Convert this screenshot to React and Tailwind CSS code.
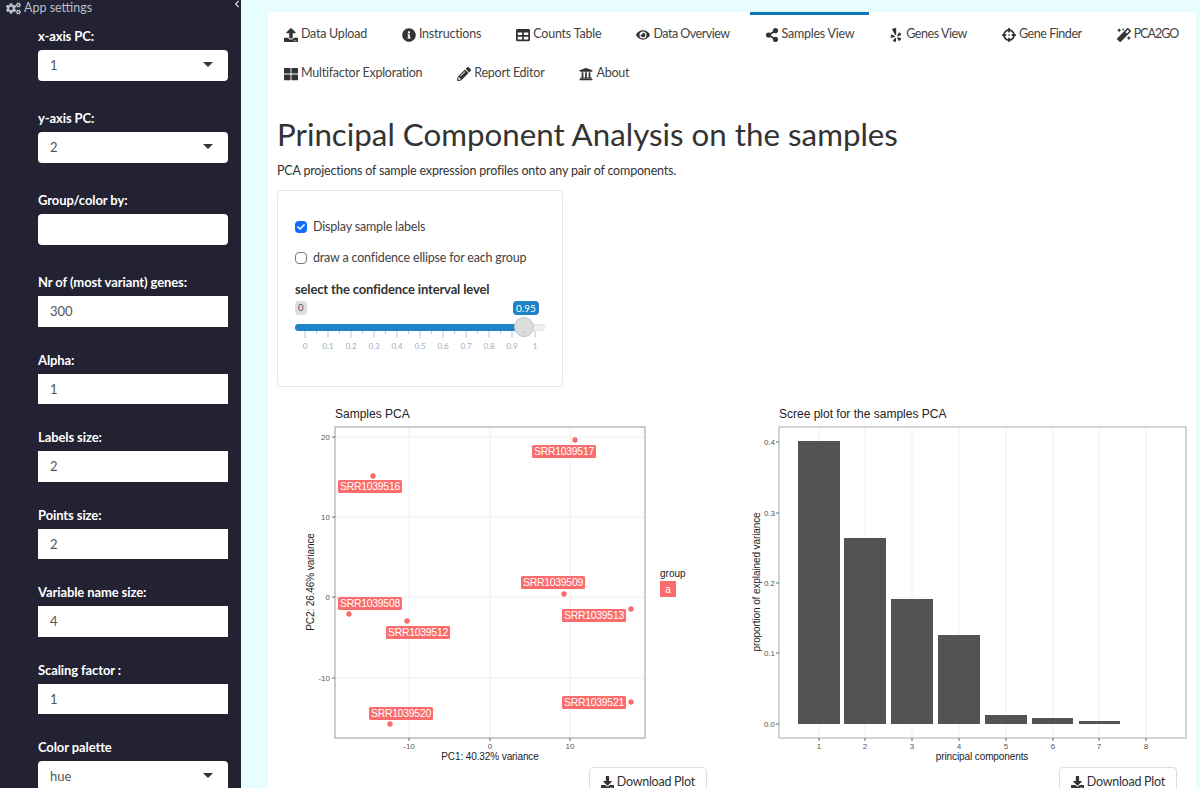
import { FaChevronLeft, FaCogs, FaUpload, FaInfoCircle, FaTable, FaEye, FaShareAlt, FaYelp, FaCrosshairs, FaMagic, FaThLarge, FaPencilAlt, FaUniversity, FaDownload, FaCheck } from 'react-icons/fa';

const fields = [
	{ label: 'x-axis PC:', value: '1', kind: 'select' },
	{ label: 'y-axis PC:', value: '2', kind: 'select' },
	{ label: 'Group/color by:', value: '', kind: 'empty' },
	{ label: 'Nr of (most variant) genes:', value: '300', kind: 'number' },
	{ label: 'Alpha:', value: '1', kind: 'number' },
	{ label: 'Labels size:', value: '2', kind: 'number' },
	{ label: 'Points size:', value: '2', kind: 'number' },
	{ label: 'Variable name size:', value: '4', kind: 'number' },
	{ label: 'Scaling factor :', value: '1', kind: 'number' },
	{ label: 'Color palette', value: 'hue', kind: 'select' },
];

const tabRows = [
	[
		{ icon: FaUpload, label: 'Data Upload', tracking: 'tracking-[-0.25px]' },
		{ icon: FaInfoCircle, label: 'Instructions', tracking: 'tracking-[-0.2px]' },
		{ icon: FaTable, label: 'Counts Table', tracking: 'tracking-[-0.2px]' },
		{ icon: FaEye, label: 'Data Overview', tracking: 'tracking-[-0.5px]' },
		{ icon: FaShareAlt, label: 'Samples View', active: true, tracking: 'tracking-[-0.25px]' },
		{ icon: FaYelp, label: 'Genes View', tracking: 'tracking-[-0.45px]' },
		{ icon: FaCrosshairs, label: 'Gene Finder', tracking: 'tracking-[-0.45px]' },
		{ icon: FaMagic, label: 'PCA2GO', tracking: 'tracking-[-1px]' },
	],
	[
		{ icon: FaThLarge, label: 'Multifactor Exploration', tracking: 'tracking-[-0.25px]' },
		{ icon: FaPencilAlt, label: 'Report Editor', tracking: 'tracking-[-0.25px]' },
		{ icon: FaUniversity, label: 'About', tracking: 'tracking-[-0.25px]' },
	],
];

const samplePoints = [[575, 440], [373, 476], [349, 614], [407, 621], [564, 594], [631, 609], [631, 702], [390, 724]];

const sampleLabels = [
	{ text: 'SRR1039517', x: 532, y: 445 },
	{ text: 'SRR1039516', x: 338, y: 480 },
	{ text: 'SRR1039509', x: 521, y: 576 },
	{ text: 'SRR1039508', x: 338, y: 597 },
	{ text: 'SRR1039512', x: 386, y: 626 },
	{ text: 'SRR1039513', x: 562, y: 609 },
	{ text: 'SRR1039521', x: 562, y: 696 },
	{ text: 'SRR1039520', x: 369, y: 707 },
];

const screeBars = [
	[798, 840, 441], [844, 886, 538], [891, 933, 599], [938, 980, 635],
	[985, 1027, 715], [1032, 1073, 718], [1079, 1120, 721],
];

const plotFont = "'Liberation Sans', Arial, sans-serif";

function SidebarField({ label, value, kind }) {
	return (
		<div className={kind === 'number' ? 'mb-[23px]' : 'mb-[27.5px]'}>
			<label className="block h-5 mb-1 text-[13px] leading-5 font-bold tracking-[-0.1px] text-white">{label}</label>
			<div className={`relative h-[30.5px] bg-white text-[13px] leading-[30px] text-[#555] pl-3 ${kind === 'number' ? '' : 'rounded'}`}>
				{value}
				{kind === 'select' && (
					<span className="absolute right-[15px] top-[12px] w-0 h-0 border-x-[5px] border-t-[5px] border-x-transparent border-t-[#333]" />
				)}
			</div>
		</div>
	);
}

function Tab({ icon: Icon, label, active, tracking }) {
	return (
		<a className={`flex items-center h-[39px] pt-[3px] px-[15px] mr-[5px] text-[12.5px] whitespace-nowrap text-[#444] border-t-[3px] ${tracking} ${active ? 'border-[#0a78b4]' : 'border-transparent'}`}>
			<Icon size={14} className="mr-[3px] text-[#333] shrink-0" />
			{label}
		</a>
	);
}

function DownloadButton() {
	return (
		<button className="flex items-center h-[30px] px-[11px] bg-white border border-[#ddd] rounded text-[12.5px] leading-[12px] tracking-[-0.25px] text-[#333] whitespace-nowrap">
			<FaDownload size={13} className="mr-[3px]" />
			Download Plot
		</button>
	);
}

function SamplesPlot() {
	return (
		<svg width="400" height="367" viewBox="300 400 400 367" style={{ fontFamily: plotFont }}>
			<text x="335" y="418" fontSize="12" fill="#222">Samples PCA</text>
			<rect x="335" y="427" width="310" height="311" fill="#fff" />
			{[437, 517, 597, 678].map(y => <line key={y} x1="335" x2="645" y1={y} y2={y} stroke="#f0f0f0" />)}
			{[409, 490, 570].map(x => <line key={x} x1={x} x2={x} y1="427" y2="738" stroke="#f0f0f0" />)}
			<rect x="335" y="427" width="310" height="311" fill="none" stroke="#999" />
			{[[437, '20'], [517, '10'], [597, '0'], [678, '-10']].map(([y, t]) => (
				<g key={t}>
					<line x1="332" x2="335" y1={y} y2={y} stroke="#666" />
					<text x="330" y={y + 3} fontSize="8" fill="#555" textAnchor="end">{t}</text>
				</g>
			))}
			{[[409, '-10'], [490, '0'], [570, '10']].map(([x, t]) => (
				<g key={t}>
					<line x1={x} x2={x} y1="738" y2="741" stroke="#666" />
					<text x={x} y="749" fontSize="8" fill="#555" textAnchor="middle">{t}</text>
				</g>
			))}
			<text x="490" y="760" fontSize="10" letterSpacing="-0.1" fill="#222" textAnchor="middle">PC1: 40.32% variance</text>
			<text transform="translate(314 582) rotate(-90)" fontSize="10" letterSpacing="-0.1" fill="#222" textAnchor="middle">PC2: 26.46% variance</text>
			{samplePoints.map(([x, y]) => <circle key={x + '-' + y} cx={x} cy={y} r="2.7" fill="#fb6d6d" />)}
			{sampleLabels.map(({ text, x, y }) => (
				<g key={text}>
					<rect x={x} y={y} width="64" height="13" rx="1.5" fill="#fb6d6d" />
					<text x={x + 32} y={y + 10} fontSize="10.4" letterSpacing="-0.25" fill="#fff" textAnchor="middle">{text}</text>
				</g>
			))}
			<text x="660" y="577" fontSize="10" fill="#222">group</text>
			<rect x="660" y="581" width="16" height="16" fill="#fb6d6d" />
			<text x="668" y="593" fontSize="10" fill="#fff" textAnchor="middle">a</text>
		</svg>
	);
}

function ScreePlot() {
	return (
		<svg width="456" height="367" viewBox="740 400 456 367" style={{ fontFamily: plotFont }}>
			<text x="779" y="418" fontSize="12" fill="#222">Scree plot for the samples PCA</text>
			<rect x="779" y="427" width="407" height="311" fill="#fff" />
			{[819, 865, 912, 959, 1006, 1053, 1099, 1146].map(x => <line key={x} x1={x} x2={x} y1="427" y2="738" stroke="#f0f0f0" />)}
			{screeBars.map(([x1, x2, top]) => (
				<rect key={x1} x={x1} y={top} width={x2 - x1} height={724 - top} fill="#535353" />
			))}
			<rect x="779" y="427" width="407" height="311" fill="none" stroke="#aaa" />
			{[[442, '0.4'], [513, '0.3'], [583, '0.2'], [653, '0.1'], [724, '0.0']].map(([y, t]) => (
				<g key={t}>
					<line x1="776" x2="779" y1={y} y2={y} stroke="#666" />
					<text x="775" y={y + 3} fontSize="8" fill="#555" textAnchor="end">{t}</text>
				</g>
			))}
			{[[819, '1'], [865, '2'], [912, '3'], [959, '4'], [1006, '5'], [1053, '6'], [1099, '7'], [1146, '8']].map(([x, t]) => (
				<g key={t}>
					<line x1={x} x2={x} y1="738" y2="741" stroke="#666" />
					<text x={x} y="749" fontSize="8" fill="#555" textAnchor="middle">{t}</text>
				</g>
			))}
			<text x="982" y="760" fontSize="10" letterSpacing="-0.1" fill="#222" textAnchor="middle">principal components</text>
			<text transform="translate(760 582) rotate(-90)" fontSize="10" letterSpacing="-0.1" fill="#222" textAnchor="middle">proportion of explained variance</text>
		</svg>
	);
}

function ConfidenceSlider() {
	const ticks = Array.from({ length: 21 }, (_, i) => i);
	return (
		<div className="relative h-[60px] mt-[3px]">
			<span className="absolute left-0 top-0 h-[14px] px-[3px] rounded-sm bg-[#ddd] text-[9.5px] leading-[14px] text-[#555]">0</span>
			<span className="absolute left-[218px] top-0 h-[14px] px-[3px] rounded-sm bg-[#2084c8] text-[10px] leading-[14px] text-white">0.95</span>
			<div className="absolute left-0 top-[23px] w-[250px] h-[7px] rounded-full bg-[#f0f0f0] border border-[#ddd]" />
			<div className="absolute left-0 top-[23px] w-[229px] h-[7px] rounded-l-full bg-[#2084c8]" />
			<div className="absolute left-[219px] top-[16px] w-[20px] h-[20px] rounded-full bg-[#dcdcdc] border border-[#c4c4c4]" />
			<svg className="absolute left-0 top-[30px]" width="250" height="30" style={{ fontFamily: "'Lato', sans-serif" }}>
				{ticks.map(i => (
					<line key={i} x1={10 + i * 11.5} x2={10 + i * 11.5} y1="0" y2={i % 2 ? 3 : 7} stroke="#a9cfe4" />
				))}
				{ticks.filter(i => i % 2 === 0).map(i => (
					<text key={i} x={10 + i * 11.5} y="18" fontSize="8" fill="#9db0bc" textAnchor="middle">{i === 0 ? '0' : i === 20 ? '1' : (i / 20).toFixed(1)}</text>
				))}
			</svg>
		</div>
	);
}

export default function App() {
	return (
		<div className="flex h-[788px] overflow-hidden bg-[#e8fdfe]" style={{ fontFamily: "'Lato', sans-serif" }}>

			{/* Sidebar */}
			<aside className="relative w-[241px] shrink-0 bg-[#222233]">
				<div className="flex items-center h-4 pl-[6px] text-[12.5px] text-[#b8c0c8]">
					<FaCogs size={15} className="mr-[3px]" />
					App settings
				</div>
				<FaChevronLeft size={8} className="absolute right-0 top-0 text-[#d8dde4]" />
				<div className="pl-[38px] pr-[13px] pt-[10px]">
					{fields.map(f => <SidebarField key={f.label} {...f} />)}
				</div>
			</aside>

			{/* Main panel */}
			<main className="w-[928px] mt-[12px] ml-[27px] bg-white">
				{tabRows.map((row, i) => (
					<div key={i} className="flex pl-px">
						{row.map(t => <Tab key={t.label} {...t} />)}
					</div>
				))}

				<div className="pl-[9px] pt-[24px]">
					<h1 className="text-[31.3px] leading-[40px] text-[#333]">Principal Component Analysis on the samples</h1>
					<p className="mt-[7px] text-[12.5px] leading-5 tracking-[-0.18px] text-[#333]">PCA projections of sample expression profiles onto any pair of components.</p>

					{/* Options card */}
					<div className="w-[286px] h-[197px] mt-[9px] px-[17px] pt-[26px] border border-[#e6e6e6] rounded">
						<div className="flex items-center h-5 text-[12.5px] tracking-[-0.18px] text-[#444]">
							<span className="flex items-center justify-center w-3 h-3 mr-[6px] rounded-sm bg-[#0d6efd] text-white"><FaCheck size={8} /></span>
							Display sample labels
						</div>
						<div className="flex items-center h-5 mt-[11px] text-[12.5px] tracking-[-0.18px] text-[#444]">
							<span className="w-3 h-3 mr-[6px] rounded-sm border border-[#777]" />
							draw a confidence ellipse for each group
						</div>
						<div className="mt-[12px] text-[13px] leading-[18px] font-bold tracking-[-0.15px] text-[#333]">select the confidence interval level</div>
						<ConfidenceSlider />
					</div>

					{/* Plots */}
					<div className="flex mt-[13px] pl-[23px] gap-[33px]">
						<div className="flex flex-col items-end w-[407px]">
							<div className="w-full"><SamplesPlot /></div>
							<DownloadButton />
						</div>
						<div className="flex flex-col items-end w-[437px]">
							<div className="w-[456px] self-start"><ScreePlot /></div>
							<DownloadButton />
						</div>
					</div>
				</div>
			</main>
		</div>
	);
}
